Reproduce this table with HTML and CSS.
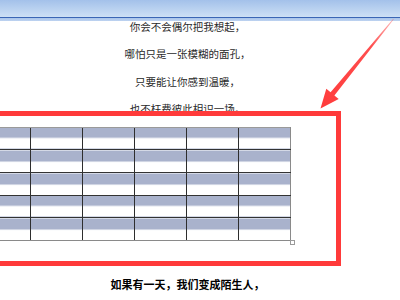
FILE: index.html
```html
<!DOCTYPE html>
<html lang="zh-CN">
<head>
<meta charset="utf-8">
<link rel="stylesheet" href="styles.css">
</head>
<body>
<div class="page">
  <header class="titlebar"></header>
  <main class="doc">
    <div class="poem">
      <p>你会不会偶尔把我想起，</p>
      <p>哪怕只是一张模糊的面孔，</p>
      <p>只要能让你感到温暖，</p>
      <p>也不枉费彼此相识一场。</p>
    </div>
    <div class="table-wrap">
      <table class="grid">
        <tbody>
          <tr><td></td><td></td><td></td><td></td><td></td><td></td></tr>
          <tr><td></td><td></td><td></td><td></td><td></td><td></td></tr>
          <tr><td></td><td></td><td></td><td></td><td></td><td></td></tr>
          <tr><td></td><td></td><td></td><td></td><td></td><td></td></tr>
          <tr><td></td><td></td><td></td><td></td><td></td><td></td></tr>
        </tbody>
      </table>
      <span class="handle"></span>
    </div>
    <p class="bold-line">如果有一天，我们变成陌生人，</p>
  </main>
  <div class="highlight"></div>
  <svg class="arrow" width="400" height="300" viewBox="0 0 400 300">
    <defs>
      <linearGradient id="fade" gradientUnits="userSpaceOnUse" x1="393" y1="19" x2="320" y2="108">
        <stop offset="0" stop-color="#ff3b3b" stop-opacity="0.35"/>
        <stop offset="0.3" stop-color="#ff3b3b" stop-opacity="0.9"/>
        <stop offset="1" stop-color="#ff3b3b"/>
      </linearGradient>
    </defs>
    <polygon fill="url(#fade)" points="393.8,19.3 334.4,95.4 338.7,98.9 320.5,108.5 326.3,88.7 330.6,92.2 393.2,18.7"/>
  </svg>
</div>
</body>
</html>
```
FILE: styles.css
```css
html, body {
  margin: 0;
  padding: 0;
  background: #ffffff;
}
.page {
  position: relative;
  width: 400px;
  height: 300px;
  overflow: hidden;
  font-family: "Noto Sans CJK SC", "Noto Sans", sans-serif;
}
.titlebar {
  display: block;
  height: 21px;
  background: linear-gradient(to bottom,
    #a3c1ea 0, #cde0f5 17px,
    #3a66b5 17px, #3a66b5 18px,
    #a9c5eb 18px, #bed3f0 21px);
}
.doc {
  display: flex;
  flex-direction: column;
  width: 375px;
}
.poem {
  display: flex;
  flex-direction: column;
  gap: 16.3px;
  text-align: center;
}
.poem p {
  margin: 0;
  font-size: 10.5px;
  line-height: 11px;
  color: #2a2a2a;
}
.table-wrap {
  position: relative;
  margin-top: 13px;
  margin-left: -22px;
  width: 313px;
}
.grid {
  border-collapse: collapse;
  table-layout: fixed;
  width: 312px;
}
.grid td {
  width: 51px;
  height: 21.6px;
  padding: 0;
  border-left: 1px solid #2e2e2e;
  border-bottom: 1px solid #333333;
  background: linear-gradient(to bottom, #a9b2cc 0, #a9b2cc 48%, #c9cfe0 48%, #ffffff 53%, #ffffff 100%);
}
.grid tr:first-child td {
  border-top: 1px solid #9a9a9a;
}
.grid tr:last-child td {
  border-bottom: 1px solid #8a8a8a;
}
.grid td:last-child {
  border-right: 1px solid #8a8a8a;
}
.handle {
  position: absolute;
  left: 312px;
  bottom: -4px;
  width: 3px;
  height: 3px;
  border: 1px solid #9a9a9a;
  background: #ffffff;
}
.bold-line {
  margin: 38px 0 0;
  text-align: center;
  font-size: 11px;
  line-height: 11px;
  font-weight: 700;
  color: #000000;
}
.highlight {
  position: absolute;
  left: -10px;
  top: 111px;
  width: 351px;
  height: 155px;
  box-sizing: border-box;
  border: 5px solid #ff3a3a;
}
.arrow {
  position: absolute;
  left: 0;
  top: 0;
}
```
